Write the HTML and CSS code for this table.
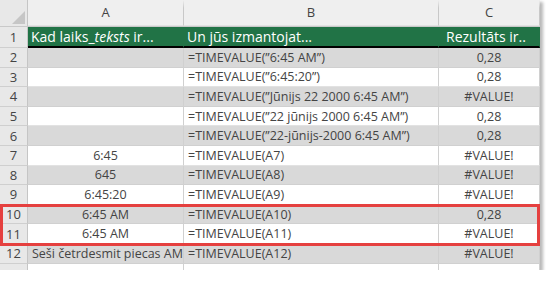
FILE: index.html
```html
<!DOCTYPE html>
<html>
<head>
<meta charset="utf-8">
<link rel="stylesheet" href="styles.css">
</head>
<body>
<div class="sheet">
  <div class="row colhead">
    <div class="num corner"><span class="tri"></span></div>
    <div class="cell a">A</div>
    <div class="cell b">B</div>
    <div class="cell c">C</div>
  </div>
  <div class="row head">
    <div class="num">1</div>
    <div class="cell a left"><span>Kad laiks_<i>teksts</i> ir...</span></div>
    <div class="cell b left"><span>Un jūs izmantojat...</span></div>
    <div class="cell c hc"><span>Rezultāts ir..</span></div>
  </div>
  <div class="row gray"><div class="num">2</div><div class="cell a"></div><div class="cell b left">=TIMEVALUE(”6:45 AM”)</div><div class="cell c">0,28</div></div>
  <div class="row"><div class="num">3</div><div class="cell a"></div><div class="cell b left">=TIMEVALUE(”6:45:20”)</div><div class="cell c">0,28</div></div>
  <div class="row gray"><div class="num">4</div><div class="cell a"></div><div class="cell b left">=TIMEVALUE(”Jūnijs 22 2000 6:45 AM”)</div><div class="cell c">#VALUE!</div></div>
  <div class="row"><div class="num">5</div><div class="cell a"></div><div class="cell b left">=TIMEVALUE(”22 jūnijs 2000 6:45 AM”)</div><div class="cell c">0,28</div></div>
  <div class="row gray"><div class="num">6</div><div class="cell a"></div><div class="cell b left">=TIMEVALUE(”22-jūnijs-2000 6:45 AM”)</div><div class="cell c">0,28</div></div>
  <div class="row"><div class="num">7</div><div class="cell a">6:45</div><div class="cell b left">=TIMEVALUE(A7)</div><div class="cell c">#VALUE!</div></div>
  <div class="row gray"><div class="num">8</div><div class="cell a">645</div><div class="cell b left">=TIMEVALUE(A8)</div><div class="cell c">#VALUE!</div></div>
  <div class="row"><div class="num">9</div><div class="cell a">6:45:20</div><div class="cell b left">=TIMEVALUE(A9)</div><div class="cell c">#VALUE!</div></div>
  <div class="highlight">
    <div class="row gray"><div class="num">10</div><div class="cell a">6:45 AM</div><div class="cell b left">=TIMEVALUE(A10)</div><div class="cell c">0,28</div></div>
    <div class="row"><div class="num">11</div><div class="cell a">6:45 AM</div><div class="cell b left">=TIMEVALUE(A11)</div><div class="cell c">#VALUE!</div></div>
    <div class="box"></div>
  </div>
  <div class="row gray"><div class="num">12</div><div class="cell a left">Seši četrdesmit piecas AM</div><div class="cell b left">=TIMEVALUE(A12)</div><div class="cell c">#VALUE!</div></div>
  <div class="row"><div class="num"></div><div class="cell a"></div><div class="cell b"></div><div class="cell c"></div></div>
</div>
</body>
</html>
```
FILE: styles.css
```css
html, body {
  margin: 0;
  padding: 0;
  background: #ffffff;
}
body {
  font-family: "Open Sans", "Noto Sans", sans-serif;
  font-size: 12.5px;
  color: #444444;
}
.sheet {
  width: 540px;
  height: 270px;
  overflow: hidden;
  background: #ffffff;
  box-shadow: 3px 2px 3px rgba(0, 0, 0, 0.28);
  position: relative;
}
.row {
  display: grid;
  grid-template-columns: 28px 156px 255px 101px;
  height: 19.6px;
  box-sizing: border-box;
}
.colhead {
  height: 27px;
  background: #efefef;
  border-bottom: 1px solid #c9c9c9;
}
.colhead .cell {
  display: flex;
  align-items: flex-end;
  justify-content: center;
  padding-bottom: 4px;
  border-right: 1px solid #c8c8c8;
  border-top: 8px solid #efefef;
  box-sizing: border-box;
  background: #efefef;
  color: #444;
  font-size: 13px;
}
.colhead .num {
  border-bottom: none;
}
.corner {
  position: relative;
}
.tri {
  position: absolute;
  right: 2px;
  bottom: 2px;
  width: 0;
  height: 0;
  border-left: 13px solid transparent;
  border-bottom: 13px solid #c6c6c6;
}
.num {
  background: #e8e8e8;
  border-right: 1px solid #c5c5c5;
  border-bottom: 1px solid #cfcfcf;
  box-sizing: border-box;
  display: flex;
  align-items: center;
  justify-content: center;
  font-size: 13px;
  color: #444;
}
.cell {
  display: flex;
  align-items: center;
  justify-content: center;
  white-space: nowrap;
  overflow: hidden;
  border-right: 1px solid #d0d0d0;
  border-bottom: 1px solid #e2e2e2;
  box-sizing: border-box;
}
.cell.left {
  justify-content: flex-start;
  padding-left: 4px;
}
.gray .cell {
  background: #d9d9d9;
  border-bottom-color: #d0d0d0;
}
.head {
  height: 21px;
}
.head .cell {
  background: #217346;
  color: #ffffff;
  font-weight: 500;
  font-size: 14px;
  border-right-color: #217346;
  border-bottom: 2px solid #000000;
}
.head .cell.left {
  padding-left: 3px;
}
.head .cell.hc {
  justify-content: flex-start;
  padding-left: 7px;
}
.head .num {
  border-bottom: 1px solid #cfcfcf;
}
.highlight {
  position: relative;
}
.box {
  position: absolute;
  left: 0;
  top: -1px;
  width: 540px;
  height: 42px;
  border: 3px solid #e5403f;
  box-sizing: border-box;
  pointer-events: none;
}
```
